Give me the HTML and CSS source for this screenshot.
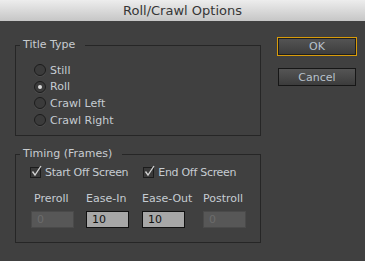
FILE: index.html
```html
<!DOCTYPE html>
<html>
<head>
	<title>Roll/Crawl Options</title>
	<link rel="stylesheet" href="styles.css">
</head>
<body>
	<div class="titlebar">Roll/Crawl Options</div>
	<div class="dialog">
		<div class="main">
			<fieldset class="group first">
				<legend>Title Type</legend>
				<div class="radios">
					<div class="radio-row"><span class="radio"></span>Still</div>
					<div class="radio-row"><span class="radio on"></span>Roll</div>
					<div class="radio-row"><span class="radio"></span>Crawl Left</div>
					<div class="radio-row"><span class="radio"></span>Crawl Right</div>
				</div>
			</fieldset>
			<fieldset class="group">
				<legend>Timing (Frames)</legend>
				<div class="checks">
					<div class="check-row">
						<span class="check"><svg width="13" height="13" viewBox="0 0 13 13"><polyline points="2.5,6.5 5,10 11,1" fill="none" stroke="#d2d2d2" stroke-width="1.3"/></svg></span>Start Off Screen
					</div>
					<div class="check-row">
						<span class="check"><svg width="13" height="13" viewBox="0 0 13 13"><polyline points="2.5,6.5 5,10 11,1" fill="none" stroke="#d2d2d2" stroke-width="1.3"/></svg></span>End Off Screen
					</div>
				</div>
				<div class="fields">
					<div class="field first-col">
						<label>Preroll</label>
						<input type="text" value="0" disabled>
					</div>
					<div class="field">
						<label>Ease-In</label>
						<input type="text" value="10">
					</div>
					<div class="field">
						<label>Ease-Out</label>
						<input type="text" value="10">
					</div>
					<div class="field">
						<label>Postroll</label>
						<input type="text" value="0" disabled>
					</div>
				</div>
			</fieldset>
		</div>
		<div class="buttons">
			<button class="btn ok">OK</button>
			<button class="btn cancel">Cancel</button>
		</div>
	</div>
</body>
</html>
```

FILE: styles.css
```css
body{
	margin: 0;
	width: 365px;
	height: 261px;
	overflow: hidden;
	background: #404040;
	font-family: "DejaVu Sans", sans-serif;
	font-size: 11px;
	color: #c6ccd2;
}
.titlebar{
	height: 21px;
	line-height: 21px;
	text-align: center;
	font-size: 13px;
	color: #363636;
	background: linear-gradient(#ededed, #c6c6c6);
}
.dialog{
	display: flex;
	gap: 16px;
	padding: 16px 0 0 15px;
}
.main{
	width: 246px;
}
.group{
	margin: 0;
	padding: 0;
	border: 1px solid #262626;
	min-width: 0;
}
.group.first{
	margin-top: 1px;
}
.group + .group{
	margin-top: 11px;
}
legend{
	margin-left: 4px;
	padding: 0 10px 0 3px;
	line-height: 14px;
	color: #c8ccd0;
}

.radios{
	padding: 10px 0 7px 18px;
}
.radio-row{
	display: flex;
	align-items: center;
	gap: 4px;
	height: 16.6px;
}
.radio{
	width: 12px;
	height: 12px;
	box-sizing: border-box;
	border-radius: 50%;
	border: 1px solid #1c1c1c;
	background: #3b3b3b;
	box-shadow: 0 1px 0 #4c4c4c;
	display: flex;
	align-items: center;
	justify-content: center;
}
.radio.on::after{
	content: '';
	width: 4px;
	height: 4px;
	border-radius: 50%;
	background: #dcdcdc;
}

.checks{
	display: flex;
	gap: 15px;
	padding: 4px 0 0 14px;
	letter-spacing: -0.3px;
}
.check-row{
	display: flex;
	align-items: center;
	gap: 4px;
	height: 14px;
}
.check{
	position: relative;
	width: 11px;
	height: 11px;
	box-sizing: border-box;
	border: 1px solid #1c1c1c;
	background: #3a3a3a;
}
.check svg{
	position: absolute;
	left: -1px;
	top: -3px;
}

.fields{
	display: grid;
	grid-template-columns: 55px 56px 61px 43px;
	margin-top: 13px;
	padding: 0 0 14px 15px;
}
.field label{
	display: block;
	line-height: 14px;
	margin-bottom: 5px;
}
.field.first-col label{
	padding-left: 3px;
}
.field input{
	width: 43px;
	height: 17px;
	box-sizing: border-box;
	margin: 0;
	padding: 0 0 0 5px;
	border: 1px solid #111;
	background: #a7a7a7;
	font-family: "DejaVu Sans", sans-serif;
	font-size: 11px;
	color: #111;
	outline: none;
}
.field input:disabled{
	border: 1px solid #4a4a4a;
	background: #575757;
	color: #6c6c6c;
}

.buttons{
	display: flex;
	flex-direction: column;
	width: 80px;
}
.btn{
	margin: 0;
	padding: 0;
	font-family: "DejaVu Sans", sans-serif;
	font-size: 11px;
	color: #b8c2cc;
	background: linear-gradient(#555555, #3c3c3c);
	border: 1px solid #161616;
}
.btn.ok{
	width: 80px;
	height: 19px;
	border-color: #d99c0a;
	box-shadow: inset 0 0 0 1px #1e1e1e;
}
.btn.cancel{
	width: 78px;
	height: 18px;
	margin: 12px 0 0 1px;
}
```
